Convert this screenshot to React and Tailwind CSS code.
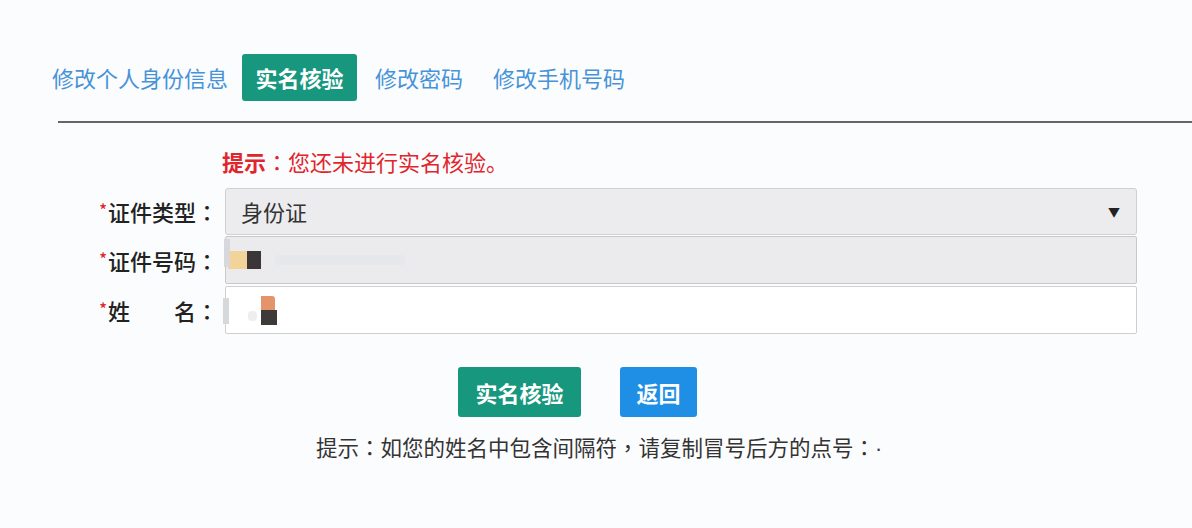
import React from 'react';

const font = { fontFamily: '"Noto Sans CJK SC", "Noto Sans", sans-serif' };

// centred full-width punctuation, as in the screenshot
function P({ children }) {
  return <span style={{ fontFamily: '"Noto Sans CJK TC", sans-serif' }}>{children}</span>;
}

function Label({ children }) {
  return (
    <div className="w-[218px] shrink-0 flex justify-end items-center text-[22px] text-[#222] font-medium">
      <span className="text-[#e0262c] text-[16px] self-start mt-[2px] mr-[1px]">*</span>
      {children}
    </div>
  );
}

export default function App() {
  return (
    <div className="w-[1192px] h-[528px] bg-[#fbfcfe] overflow-hidden" style={font}>
      {/* tabs */}
      <div className="flex items-center pl-[52px] pt-[54px] text-[22px]">
        <div className="h-[47px] flex items-center text-[#4793d8]">修改个人身份信息</div>
        <div className="ml-[14px] h-[47px] w-[115px] flex items-center justify-center rounded-[3px] bg-[#18977f] text-white font-bold">实名核验</div>
        <div className="ml-[18px] h-[47px] flex items-center text-[#4793d8]">修改密码</div>
        <div className="ml-[30px] h-[47px] flex items-center text-[#4793d8]">修改手机号码</div>
      </div>
      <div className="ml-[58px] mt-[20px] h-[2px] bg-[#666]" />

      {/* hint */}
      <div className="ml-[222px] mt-[23px] h-[30px] flex items-center text-[22px] text-[#e0262c]">
        <span className="font-semibold">提示</span><P>：</P>您还未进行实名核验。
      </div>

      {/* form */}
      <div className="mt-[12px] flex flex-col gap-[1px]">
        <div className="flex items-center">
          <Label>证件类型<P>：</P></Label>
          <div className="ml-[7px] w-[912px] h-[47px] flex items-center justify-between px-[15px] bg-[#ececee] border border-[#d0d0d0] rounded-[3px]">
            <span className="text-[22px] text-[#333]">身份证</span>
            <span className="text-[12px] text-[#222] pr-[1px]">▼</span>
          </div>
        </div>
        <div className="flex items-center">
          <Label>证件号码<P>：</P></Label>
          <div className="ml-[7px] w-[912px] h-[48px] flex items-center bg-[#ebebed] border border-[#c8c8c8] rounded-[2px] relative">
            <div className="absolute left-[-2px] top-[2px] w-[6px] h-[28px] bg-[#d6d8db]" />
            <div className="ml-[2px] w-[19px] h-[18px] bg-[#f2d49a]" />
            <div className="w-[14px] h-[18px] bg-[#3c3638]" />
            <div className="ml-[14px] w-[130px] h-[10px] bg-[#e6e7ea] rounded-sm" />
          </div>
        </div>
        <div className="flex items-center mt-[1px]">
          <Label>
            姓<span className="inline-block w-[44px]" />名<P>：</P>
          </Label>
          <div className="ml-[7px] w-[912px] h-[48px] flex items-center bg-white border border-[#cfcfcf] rounded-[2px] relative">
            <div className="absolute left-[-3px] top-[11px] w-[6px] h-[26px] bg-[#d6d8db]" />
            <div className="ml-[22px] w-[9px] h-[10px] mt-[12px] bg-[#eeeeee] rounded-sm" />
            <div className="ml-[4px] flex flex-col">
              <div className="w-[14px] h-[14px] bg-[#e5936a] rounded-tr-[3px]" />
              <div className="w-[16px] h-[15px] bg-[#3e3a3a]" />
            </div>
          </div>
        </div>
      </div>

      {/* buttons */}
      <div className="mt-[33px] ml-[458px] flex gap-[39px]">
        <button className="w-[123px] h-[50px] rounded-[3px] bg-[#18977f] text-white text-[22px] font-bold">实名核验</button>
        <button className="w-[77px] h-[50px] rounded-[3px] bg-[#1f8fe6] text-white text-[22px] font-bold">返回</button>
      </div>
      <div className="ml-[316px] mt-[14px] text-[21.5px] text-[#333]">
        提示<P>：</P>如您的姓名中包含间隔符<P>，</P>请复制冒号后方的点号<P>：</P>
        <span style={{ fontFamily: '"Liberation Sans", sans-serif' }}>·</span>
      </div>
    </div>
  );
}
